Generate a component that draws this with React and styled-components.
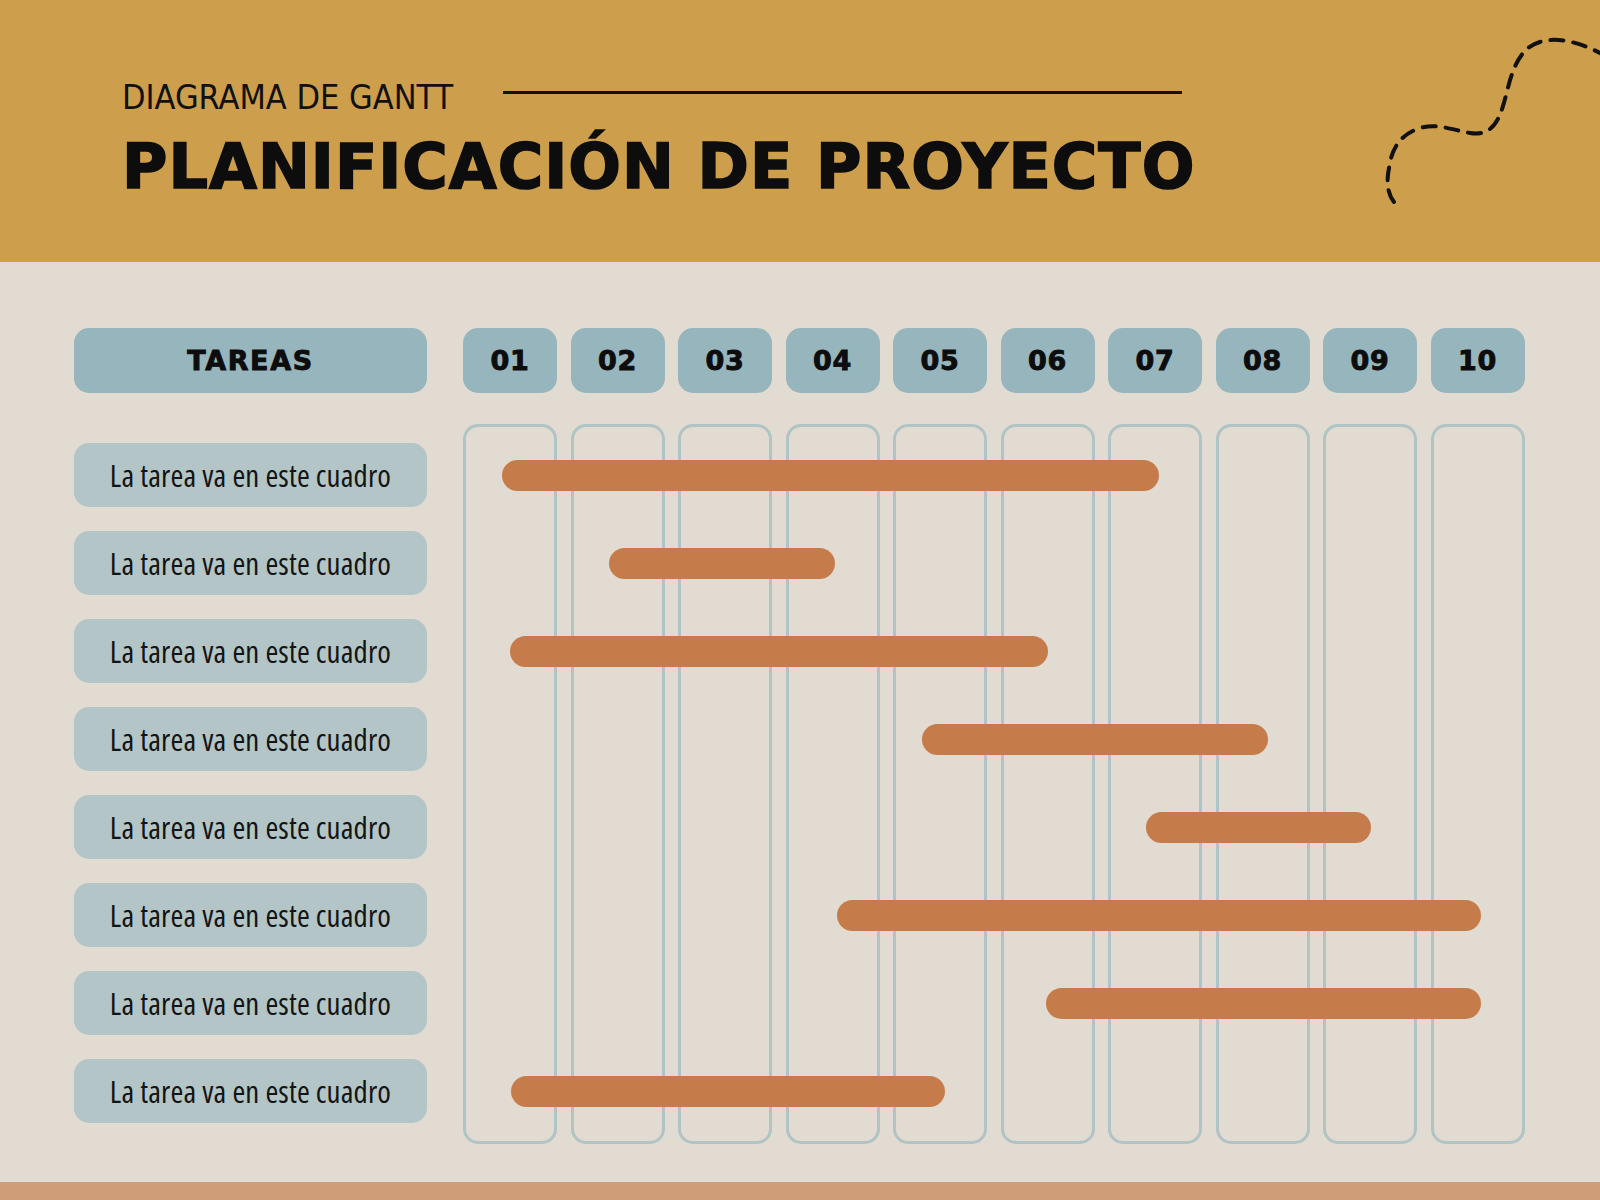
import React from "react";
import styled, { createGlobalStyle } from "styled-components";

const Global = createGlobalStyle`
  html, body { margin: 0; padding: 0; }
  body { background: #E2DBD1; font-family: "Open Sans", "Liberation Sans", Arial, sans-serif; }
`;

const Page = styled.div`
  width: 1600px;
  min-height: 1200px;
  display: flex;
  flex-direction: column;
  background: #E2DBD1;
`;

const Header = styled.header`
  height: 262px;
  background: #CD9E4C;
  display: flex;
  align-items: flex-start;
  overflow: hidden;
`;

const HeaderText = styled.div`
  padding: 78px 0 0 122px;
`;

const SubRow = styled.div`
  display: flex;
  align-items: flex-start;
`;

const Subtitle = styled.h2`
  margin: 2px 0 0;
  width: 321px;
  font-family: "DejaVu Sans Condensed", "DejaVu Sans", sans-serif;
  font-stretch: semi-condensed;
  font-weight: 400;
  font-size: 34px;
  line-height: 1;
  color: #111;
  white-space: nowrap;
`;

const Rule = styled.div`
  width: 679px;
  height: 3px;
  margin: 12.5px 0 0 60px;
  background: #111;
`;

const Title = styled.h1`
  margin: 22px 0 0;
  font-family: "DejaVu Sans", "Liberation Sans", sans-serif;
  font-weight: 700;
  font-size: 62px;
  line-height: 1;
  letter-spacing: 1px;
  color: #0d0d0d;
  -webkit-text-stroke: 1.6px #0d0d0d;
  white-space: nowrap;
`;

const Squiggle = styled.svg`
  margin-left: auto;
  margin-top: 30px;
  flex: none;
`;

const Main = styled.main`
  display: grid;
  grid-template-columns: 353px 1062px;
  column-gap: 36px;
  row-gap: 31px;
  padding: 66px 0 0 74px;
`;

const HeadCell = styled.div`
  height: 65px;
  border-radius: 15px;
  background: #97B5BD;
  display: flex;
  align-items: center;
  justify-content: center;
  font-family: "DejaVu Sans", "Liberation Sans", sans-serif;
  font-weight: 700;
  font-size: 27px;
  color: #0d0d0d;
  letter-spacing: ${(p) => (p.$wide ? "1.6px" : "0.8px")};
  -webkit-text-stroke: 0.9px #0d0d0d;
`;

const NumRow = styled.div`
  display: grid;
  grid-template-columns: repeat(10, 94px);
  column-gap: 13.5px;
`;

const TaskList = styled.div`
  display: flex;
  flex-direction: column;
  gap: 24px;
  padding-top: 19px;
`;

const TaskBox = styled.div`
  height: 64px;
  border-radius: 15px;
  background: #B3C5C6;
  display: flex;
  align-items: center;
  justify-content: center;
  font-family: "Open Sans", "Noto Sans", sans-serif;
  font-stretch: 75%;
  font-weight: 500;
  font-size: 31px;
  letter-spacing: 0.15px;
  color: #141414;
  white-space: nowrap;
`;

const Chart = styled.div`
  position: relative;
  height: 720px;
`;

const Columns = styled.div`
  display: grid;
  grid-template-columns: repeat(10, 94px);
  column-gap: 13.5px;
  height: 100%;
`;

const ColumnOutline = styled.div`
  box-sizing: border-box;
  border: 3px solid #B0C4C5;
  border-radius: 15px;
`;

const BarLayer = styled.div`
  position: absolute;
  inset: 0;
  display: flex;
  flex-direction: column;
  gap: 24px;
  padding-top: 19px;
`;

const BarRow = styled.div`
  position: relative;
  height: 64px;
`;

const Bar = styled.div`
  position: absolute;
  top: 16.5px;
  height: 31px;
  border-radius: 16px;
  background: #C67C4A;
`;

const Footer = styled.footer`
  margin-top: auto;
  height: 18px;
  background: #CF9E78;
`;

const bars = [
  [39, 657],
  [146, 226],
  [47, 538],
  [459, 346],
  [683, 225],
  [374, 644],
  [583, 435],
  [48, 434],
];

const cols = ["01", "02", "03", "04", "05", "06", "07", "08", "09", "10"];

export default function App() {
  return (
    <Page>
      <Global />
      <Header>
        <HeaderText>
          <SubRow>
            <Subtitle>DIAGRAMA DE GANTT</Subtitle>
            <Rule />
          </SubRow>
          <Title>PLANIFICACIÓN DE PROYECTO</Title>
        </HeaderText>
        <Squiggle width="220" height="180" viewBox="0 0 220 180">
          <path
            d="M14 172 C 6 162 7 148 9 138 C 12 116 22 104 40 98 C 58 93 72 100 90 103 C 108 106 117 96 123 76 C 129 56 132 32 148 18 C 165 5 192 8 222 24"
            fill="none"
            stroke="#111"
            strokeWidth="4"
            strokeDasharray="13 10"
            strokeLinecap="round"
          />
        </Squiggle>
      </Header>
      <Main>
        <HeadCell $wide>TAREAS</HeadCell>
        <NumRow>
          {cols.map((c) => (
            <HeadCell key={c}>{c}</HeadCell>
          ))}
        </NumRow>
        <TaskList>
          {bars.map((_, i) => (
            <TaskBox key={i}>La tarea va en este cuadro</TaskBox>
          ))}
        </TaskList>
        <Chart>
          <Columns>
            {cols.map((c) => (
              <ColumnOutline key={c} />
            ))}
          </Columns>
          <BarLayer>
            {bars.map(([left, width], i) => (
              <BarRow key={i}>
                <Bar style={{ left: `${left}px`, width: `${width}px` }} />
              </BarRow>
            ))}
          </BarLayer>
        </Chart>
      </Main>
      <Footer />
    </Page>
  );
}
